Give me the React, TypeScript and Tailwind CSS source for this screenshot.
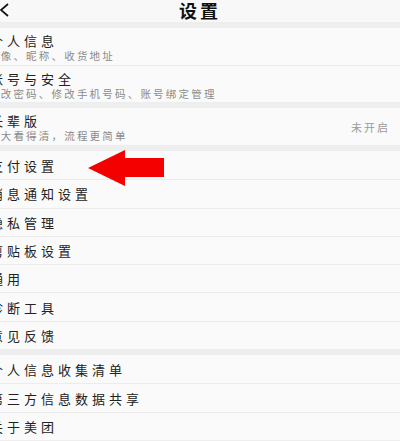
import React from "react";

type Row = { title: string; sub?: string; value?: string };

const groups: { rows: Row[]; tall?: boolean }[] = [
  {
    tall: true,
    rows: [
      { title: "个人信息", sub: "头像、昵称、收货地址" },
      { title: "账号与安全", sub: "修改密码、修改手机号码、账号绑定管理" },
    ],
  },
  {
    tall: true,
    rows: [{ title: "长辈版", sub: "字大看得清，流程更简单", value: "未开启" }],
  },
  {
    rows: [
      { title: "支付设置" },
      { title: "消息通知设置" },
      { title: "隐私管理" },
      { title: "剪贴板设置" },
      { title: "通用" },
      { title: "诊断工具" },
      { title: "意见反馈" },
    ],
  },
  {
    rows: [
      { title: "个人信息收集清单" },
      { title: "第三方信息数据共享" },
      { title: "关于美团" },
    ],
  },
];

function SettingRow({ row, tall, first }: { row: Row; tall?: boolean; first: boolean }) {
  return (
    <div
      className={`flex justify-between pr-[10px] ${
        first ? "" : "border-t border-[#ececec]"
      } ${tall ? "h-[37px] items-start pt-[5px]" : "h-[28.3px] items-center pt-[1px]"}`}
    >
      <div className="-ml-[10px] flex flex-col">
        <span className="text-[13px] leading-[16px] tracking-[4px] text-[#222] whitespace-nowrap">
          {row.title}
        </span>
        {row.sub && (
          <span className="-ml-[2px] text-[10.5px] leading-[13px] tracking-[2.2px] text-[#8a8a8a] whitespace-nowrap">
            {row.sub}
          </span>
        )}
      </div>
      {row.value && (
        <span className="mt-[6px] text-[11px] tracking-[2px] text-[#9a9a9a]">{row.value}</span>
      )}
    </div>
  );
}

export default function App() {
  return (
    <div className="relative h-[441px] w-[400px] overflow-hidden bg-[#eeeeee] font-['Noto_Sans_CJK_SC','Liberation_Sans',sans-serif]">
      <div className="relative flex h-[22px] items-center justify-center bg-[#f8f8f8] pb-[2px]">
        <svg className="absolute left-0 top-[3px]" width="9" height="14" viewBox="0 0 9 14">
          <path d="M8 1 L1 7 L8 13" fill="none" stroke="#111" strokeWidth="1.7" />
        </svg>
        <span className="text-[18px] font-bold leading-none tracking-[3px] text-[#111]">设置</span>
      </div>

      <div className="flex flex-col gap-[6px] pt-[6px]">
        {groups.map((g, gi) => (
          <div key={gi} className="bg-[#fafafa]">
            {g.rows.map((r, ri) => (
              <SettingRow key={r.title} row={r} tall={g.tall} first={ri === 0} />
            ))}
          </div>
        ))}
      </div>

      <svg className="absolute left-[87px] top-[150px]" width="78" height="36" viewBox="0 0 78 36">
        <path d="M1 18 L38 0 L38 8 L77 8 L77 27 L38 27 L38 36 Z" fill="#f40000" />
      </svg>
    </div>
  );
}
